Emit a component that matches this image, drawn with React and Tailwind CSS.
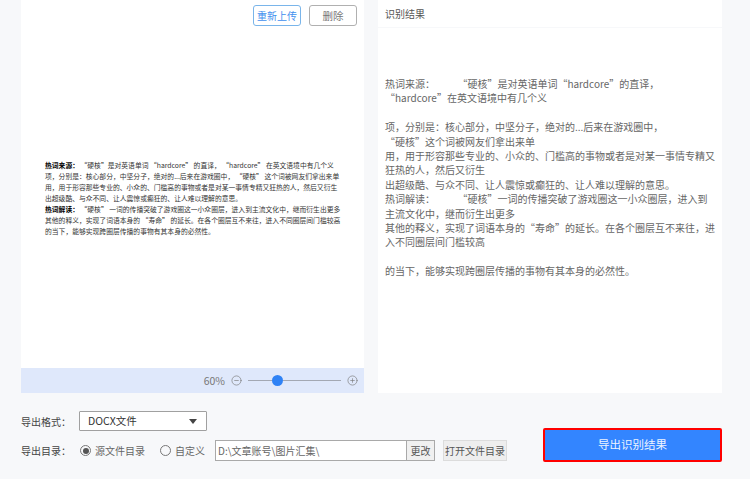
import { CircleMinus, CirclePlus } from 'lucide-react'

const previewLines = [
  ['热词来源：', ' “硬核”是对英语单词 “hardcore” 的直译， “hardcore” 在英文语境中有几个义'],
  ['', '项，分别是：核心部分，中坚分子，绝对的...后来在游戏圈中， “硬核” 这个词被网友们拿出来单'],
  ['', '用，用于形容那些专业的、小众的、门槛高的事物或者是对某一事情专精又狂热的人，然后又衍生'],
  ['', '出超级酷、与众不同、让人震惊或癫狂的、让人难以理解的意思。'],
  ['热词解读：', ' “硬核” 一词的传播突破了游戏圈这一小众圈层，进入到主流文化中，继而衍生出更多'],
  ['', '其他的释义，实现了词语本身的 “寿命” 的延长。在各个圈层互不来往，进入不同圈层间门槛较高'],
  ['', '的当下，能够实现跨圈层传播的事物有其本身的必然性。'],
]

const resultLines = [
  '热词来源：          “硬核”是对英语单词“hardcore”的直译，',
  '“hardcore”在英文语境中有几个义',
  '',
  '项，分别是：核心部分，中坚分子，绝对的...后来在游戏圈中，',
  '“硬核”这个词被网友们拿出来单',
  '用，用于形容那些专业的、小众的、门槛高的事物或者是对某一事情专精又',
  '狂热的人，然后又衍生',
  '出超级酷、与众不同、让人震惊或癫狂的、让人难以理解的意思。',
  '热词解读：          “硬核”一词的传播突破了游戏圈这一小众圈层，进入到',
  '主流文化中，继而衍生出更多',
  '其他的释义，实现了词语本身的“寿命”的延长。在各个圈层互不来往，进',
  '入不同圈层间门槛较高',
  '',
  '的当下，能够实现跨圈层传播的事物有其本身的必然性。',
]

function Radio({ checked }) {
  return (
    <span className="flex h-[11px] w-[11px] shrink-0 items-center justify-center rounded-full border border-[#777]">
      {checked && <span className="h-[6px] w-[6px] rounded-full bg-[#555]" />}
    </span>
  )
}

export default function App() {
  return (
    <div className="flex h-[479px] w-[750px] flex-col overflow-hidden bg-[#f7f8fa] font-['Noto_Sans_CJK_SC','Microsoft_YaHei',sans-serif]">
      {/* Panels */}
      <div className="flex h-[393px] gap-[14px] pl-[21px]">
        <div className="flex w-[343px] flex-col">
          <div className="h-[368px] bg-white pt-[5px]">
            <div className="flex justify-end gap-2 pr-[7px]">
              <button className="flex h-[21px] w-[48px] items-center justify-center rounded-[3px] border border-[#7ab5ea] text-[10px] text-[#3f8fee]">
                重新上传
              </button>
              <button className="flex h-[21px] w-[48px] items-center justify-center rounded-[3px] border border-[#b0b0b0] text-[10.5px] text-[#777]">
                删除
              </button>
            </div>
            <div className="mt-[134px] pl-[24px] text-[6.8px] leading-[11px] text-[#333]">
              {previewLines.map((line, i) => (
                <div key={i} className="h-[11px] whitespace-pre">
                  <span className="font-bold text-black">{line[0]}</span>
                  {line[1]}
                </div>
              ))}
            </div>
          </div>

          <div className="flex h-[25px] items-center justify-end bg-[#dfe8fb] pr-[6px] text-[#777]">
            <span className="mr-[6px] text-[10.5px]">60%</span>
            <CircleMinus size={11} strokeWidth={1.4} className="mr-[6px]" />
            <div className="mr-[6px] flex w-[93px] items-center">
              <div className="h-px w-[24px] bg-[#a3a8b3]" />
              <div className="h-[11px] w-[11px] rounded-full bg-[#2f82f5]" />
              <div className="h-px flex-1 bg-[#a3a8b3]" />
            </div>
            <CirclePlus size={11} strokeWidth={1.4} />
          </div>
        </div>

        <div className="flex w-[344px] flex-col gap-px">
          <div className="flex h-[27px] items-center bg-white pl-[7px] text-[10px] text-[#555]">
            识别结果
          </div>
          <div className="flex-1 bg-white pl-[7px] pt-[49px] text-[10px] leading-[14.4px] text-[#666]">
            {resultLines.map((line, i) => (
              <div key={i} className="h-[14.4px] whitespace-pre">
                {line}
              </div>
            ))}
          </div>
        </div>
      </div>

      {/* Export options */}
      <div className="flex flex-1 pl-[21px]">
        <div className="flex w-[487px] flex-col gap-[9px] pt-[18px] text-[10px] text-[#444]">
          <div className="flex items-center">
            <span className="w-[58px]">导出格式：</span>
            <div className="flex h-[20px] w-[128px] items-center justify-between rounded-[1px] border border-[#a0a0a0] bg-white pl-[8px] pr-[9px] text-[10.5px] text-[#333]">
              DOCX文件
              <svg width="8" height="5" viewBox="0 0 8 5">
                <path d="M0 0h8L4 5z" fill="#444" />
              </svg>
            </div>
          </div>

          <div className="flex items-center">
            <span className="w-[59px]">导出目录：</span>
            <Radio checked />
            <span className="ml-[4px] w-[65px] text-[#666]">源文件目录</span>
            <Radio />
            <span className="ml-[4px] w-[40px] text-[#666]">自定义</span>
            <div className="flex h-[21px] w-[192px] items-center border border-[#a9a9a9] bg-white pl-[2px] text-[#666]">
              D:\文章账号\图片汇集\
            </div>
            <button className="flex h-[21px] w-[28px] items-center justify-center border border-l-0 border-[#a9a9a9] bg-[#f0f0f0] text-[#555]">
              更改
            </button>
            <button className="ml-[8px] flex h-[21px] w-[64px] items-center justify-center whitespace-nowrap border border-[#dcdcdc] bg-[#eeeeee] text-[#555]">
              打开文件目录
            </button>
          </div>
        </div>

        <div className="pl-[35px] pt-[35px]">
          <button className="flex h-[34px] w-[179px] items-center justify-center rounded-[2px] border-2 border-[#f00] bg-[#3385ff] text-[11.5px] text-[#eef4ff]">
            导出识别结果
          </button>
        </div>
      </div>
    </div>
  )
}
